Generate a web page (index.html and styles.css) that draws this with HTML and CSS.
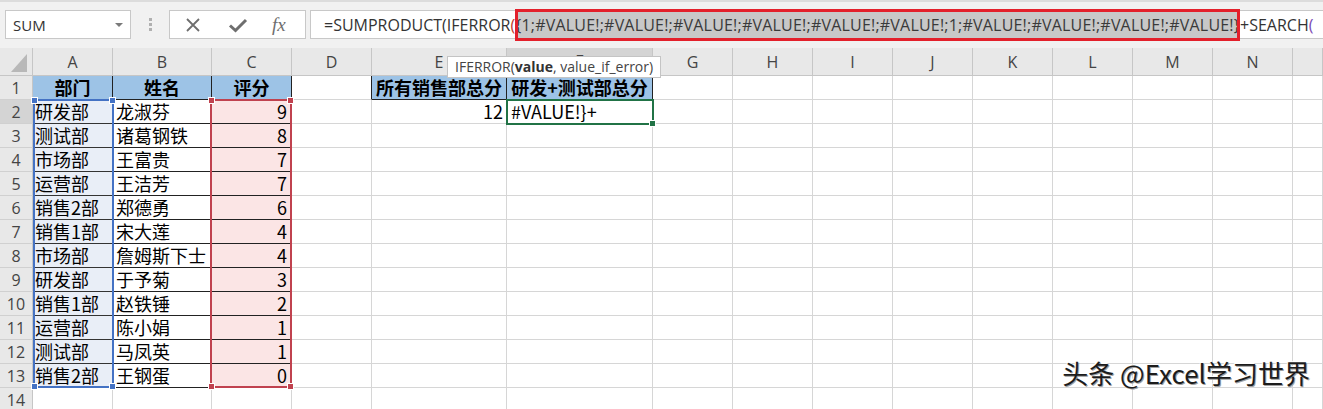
FILE: index.html
```html
<!DOCTYPE html>
<html lang="zh-CN">
<head>
<meta charset="utf-8">
<title>Excel</title>
<link rel="stylesheet" href="styles.css">
</head>
<body>
<div class="fbar">
  <div class="namebox">SUM<span class="caret"></span></div>
  <div class="grip"><span></span><span></span><span></span></div>
  <div class="fxbox">
    <svg class="ico" width="16" height="16" viewBox="0 0 16 16"><path d="M2 2 L14 14 M14 2 L2 14" stroke="#6e6e6e" stroke-width="1.8" fill="none"/></svg>
    <svg class="ico" width="20" height="16" viewBox="0 0 20 16"><path d="M2 8.5 L7.5 13.5 L18 3" stroke="#6e6e6e" stroke-width="3" fill="none" stroke-linejoin="miter"/></svg>
    <span class="fx">fx</span>
  </div>
  <div class="formula"><span>=SUMPRODUCT(IFERROR<span class="p1">(</span></span><span class="hl">{1;#VALUE!;#VALUE!;#VALUE!;#VALUE!;#VALUE!;#VALUE!;1;#VALUE!;#VALUE!;#VALUE!;#VALUE!}</span><span>+SEARCH<span class="p2">(</span></span></div>
</div>

<div class="sheet">
  <div class="c corner"><span class="tri"></span></div><div class="c ch">A</div><div class="c ch">B</div><div class="c ch">C</div><div class="c ch">D</div><div class="c ch">E</div><div class="c ch sel">F</div><div class="c ch">G</div><div class="c ch">H</div><div class="c ch">I</div><div class="c ch">J</div><div class="c ch">K</div><div class="c ch">L</div><div class="c ch">M</div><div class="c ch">N</div><div class="c ch"></div>

  <div class="c rh">1</div><div class="c th">部门</div><div class="c th">姓名</div><div class="c th">评分</div><div class="c bkr"></div><div class="c th">所有销售部总分</div><div class="c th">研发+测试部总分</div><div class="c"></div><div class="c"></div><div class="c"></div><div class="c"></div><div class="c"></div><div class="c"></div><div class="c"></div><div class="c"></div><div class="c"></div>

  <div class="c rh sel">2</div><div class="c ta">研发部</div><div class="c tb">龙淑芬</div><div class="c tc">9</div><div class="c"></div><div class="c num">12</div><div class="c txt">#VALUE!}+</div><div class="c"></div><div class="c"></div><div class="c"></div><div class="c"></div><div class="c"></div><div class="c"></div><div class="c"></div><div class="c"></div><div class="c"></div>

  <div class="c rh">3</div><div class="c ta">测试部</div><div class="c tb">诸葛钢铁</div><div class="c tc">8</div><div class="c"></div><div class="c"></div><div class="c"></div><div class="c"></div><div class="c"></div><div class="c"></div><div class="c"></div><div class="c"></div><div class="c"></div><div class="c"></div><div class="c"></div><div class="c"></div>

  <div class="c rh">4</div><div class="c ta">市场部</div><div class="c tb">王富贵</div><div class="c tc">7</div><div class="c"></div><div class="c"></div><div class="c"></div><div class="c"></div><div class="c"></div><div class="c"></div><div class="c"></div><div class="c"></div><div class="c"></div><div class="c"></div><div class="c"></div><div class="c"></div>

  <div class="c rh">5</div><div class="c ta">运营部</div><div class="c tb">王洁芳</div><div class="c tc">7</div><div class="c"></div><div class="c"></div><div class="c"></div><div class="c"></div><div class="c"></div><div class="c"></div><div class="c"></div><div class="c"></div><div class="c"></div><div class="c"></div><div class="c"></div><div class="c"></div>

  <div class="c rh">6</div><div class="c ta">销售2部</div><div class="c tb">郑德勇</div><div class="c tc">6</div><div class="c"></div><div class="c"></div><div class="c"></div><div class="c"></div><div class="c"></div><div class="c"></div><div class="c"></div><div class="c"></div><div class="c"></div><div class="c"></div><div class="c"></div><div class="c"></div>

  <div class="c rh">7</div><div class="c ta">销售1部</div><div class="c tb">宋大莲</div><div class="c tc">4</div><div class="c"></div><div class="c"></div><div class="c"></div><div class="c"></div><div class="c"></div><div class="c"></div><div class="c"></div><div class="c"></div><div class="c"></div><div class="c"></div><div class="c"></div><div class="c"></div>

  <div class="c rh">8</div><div class="c ta">市场部</div><div class="c tb">詹姆斯下士</div><div class="c tc">4</div><div class="c"></div><div class="c"></div><div class="c"></div><div class="c"></div><div class="c"></div><div class="c"></div><div class="c"></div><div class="c"></div><div class="c"></div><div class="c"></div><div class="c"></div><div class="c"></div>

  <div class="c rh">9</div><div class="c ta">研发部</div><div class="c tb">于予菊</div><div class="c tc">3</div><div class="c"></div><div class="c"></div><div class="c"></div><div class="c"></div><div class="c"></div><div class="c"></div><div class="c"></div><div class="c"></div><div class="c"></div><div class="c"></div><div class="c"></div><div class="c"></div>

  <div class="c rh">10</div><div class="c ta">销售1部</div><div class="c tb">赵铁锤</div><div class="c tc">2</div><div class="c"></div><div class="c"></div><div class="c"></div><div class="c"></div><div class="c"></div><div class="c"></div><div class="c"></div><div class="c"></div><div class="c"></div><div class="c"></div><div class="c"></div><div class="c"></div>

  <div class="c rh">11</div><div class="c ta">运营部</div><div class="c tb">陈小娟</div><div class="c tc">1</div><div class="c"></div><div class="c"></div><div class="c"></div><div class="c"></div><div class="c"></div><div class="c"></div><div class="c"></div><div class="c"></div><div class="c"></div><div class="c"></div><div class="c"></div><div class="c"></div>

  <div class="c rh">12</div><div class="c ta">测试部</div><div class="c tb">马凤英</div><div class="c tc">1</div><div class="c"></div><div class="c"></div><div class="c"></div><div class="c"></div><div class="c"></div><div class="c"></div><div class="c"></div><div class="c"></div><div class="c"></div><div class="c"></div><div class="c"></div><div class="c"></div>

  <div class="c rh">13</div><div class="c ta">销售2部</div><div class="c tb">王钢蛋</div><div class="c tc">0</div><div class="c"></div><div class="c"></div><div class="c"></div><div class="c"></div><div class="c"></div><div class="c"></div><div class="c"></div><div class="c"></div><div class="c"></div><div class="c"></div><div class="c"></div><div class="c"></div>

  <div class="c rh">14</div><div class="c"></div><div class="c"></div><div class="c"></div><div class="c"></div><div class="c"></div><div class="c"></div><div class="c"></div><div class="c"></div><div class="c"></div><div class="c"></div><div class="c"></div><div class="c"></div><div class="c"></div><div class="c"></div><div class="c"></div>

  <div class="range blue"><i class="k tl"></i><i class="k tr"></i><i class="k bl"></i><i class="k br"></i></div>
  <div class="range red"><i class="k tl"></i><i class="k tr"></i><i class="k bl"></i><i class="k br"></i></div>
  <div class="cursor"><i class="handle"></i></div>
</div>

<div class="tip">IFERROR(<b>value</b>, value_if_error)</div>
<div class="mark">头条 @Excel学习世界</div>
</body>
</html>
```

FILE: styles.css
```css
html, body {
  margin: 0;
  padding: 0;
}
body {
  width: 1323px;
  height: 409px;
  overflow: hidden;
  background: #fff;
  position: relative;
  font-family: "Noto Sans CJK SC", "Noto Sans", sans-serif;
}

/* formula bar */
.fbar {
  height: 48px;
  box-sizing: border-box;
  background: #f1f1f1;
  border-top: 2px solid #dcdcdc;
  padding-top: 8px;
  display: flex;
  align-items: flex-start;
}
.namebox {
  margin-left: 5px;
  width: 126px;
  height: 29px;
  box-sizing: border-box;
  border: 1px solid #c8c8c8;
  background: #fff;
  display: flex;
  align-items: center;
  padding-left: 7px;
  font: 15px "Open Sans", sans-serif;
  color: #333;
  position: relative;
}
.caret {
  position: absolute;
  right: 7px;
  top: 12px;
  width: 0;
  height: 0;
  border-left: 4px solid transparent;
  border-right: 4px solid transparent;
  border-top: 4px solid #7a7a7a;
}
.grip {
  width: 38px;
  height: 29px;
  display: flex;
  flex-direction: column;
  align-items: center;
  justify-content: center;
  gap: 2px;
}
.grip span {
  width: 3px;
  height: 3px;
  background: #b0b0b0;
}
.fxbox {
  width: 137px;
  height: 29px;
  box-sizing: border-box;
  border: 1px solid #c8c8c8;
  background: #fff;
  display: flex;
  align-items: center;
  padding-left: 15px;
  gap: 27px;
}
.ico { display: block; }
.fx {
  font: italic 19px "Liberation Serif", serif;
  color: #6e6e6e;
  margin-left: -3px;
}
.formula {
  margin-left: 4px;
  flex: 1;
  height: 29px;
  box-sizing: border-box;
  border: 1px solid #c8c8c8;
  border-right: none;
  background: #fff;
  display: flex;
  align-items: center;
  padding-left: 13px;
  white-space: nowrap;
  font: 16px "Open Sans", sans-serif;
  color: #333;
}
.p1 { color: #c0392b; }
.p2 { color: #7b4bb5; }
.hl {
  display: inline-block;
  height: 32px;
  line-height: 32px;
  box-sizing: border-box;
  background: #c8c8c8;
  outline: 3px solid #e3202b;
  outline-offset: -3px;
  font-size: 16px;
  letter-spacing: 0.2px;
  color: #3a3a3a;
}

/* sheet grid */
.sheet {
  position: relative;
  display: grid;
  grid-template-columns: 33px 80px 99px 80px 80px 135px 146px repeat(8, 80px) 30px;
  grid-template-rows: 28px repeat(14, 24px);
}
.c {
  box-sizing: border-box;
  border-right: 1px solid #d6d6d6;
  border-bottom: 1px solid #d6d6d6;
  font-size: 18px;
  line-height: 23px;
  color: #000;
  white-space: nowrap;
}
.ch, .rh, .corner {
  background: #e8e8e8;
  border-color: #c6c6c6;
  color: #444;
  font: 16px "Open Sans", sans-serif;
  display: flex;
  align-items: center;
  justify-content: center;
}
.rh { border-bottom-color: #d0d0d0; }
.ch.sel, .rh.sel { background: #d4d4d4; }
.ch.sel { border-bottom: 2px solid #217346; }
.corner { position: relative; }
.tri {
  position: absolute;
  right: 5px;
  bottom: 3px;
  width: 16px;
  height: 18px;
  background: #b8b8b8;
  clip-path: polygon(100% 0, 100% 100%, 0 100%);
}
.th {
  background: #9dc3e6;
  font-weight: 700;
  text-align: center;
  border-right-color: #222;
  border-bottom-color: #222;
}
.bkr { border-right-color: #222; }
.ta {
  background: #e9eef7;
  border-right-color: #222;
  border-bottom-color: #333;
  padding-left: 2px;
}
.tb {
  border-right-color: #222;
  border-bottom-color: #222;
  padding-left: 3px;
}
.tc {
  background: #fbe5e5;
  border-right-color: #222;
  border-bottom-color: #222;
  text-align: right;
  padding-right: 4px;
}
.num { text-align: right; padding-right: 3px; }
.txt { padding-left: 4px; }

/* reference highlights over the grid */
.range {
  position: absolute;
  top: 51px;
  height: 289px;
  box-sizing: border-box;
  border: 2px solid;
  pointer-events: none;
}
.range.blue { left: 33px; width: 81px; border-color: #4472c4; }
.range.red { left: 210px; width: 82px; border-color: #c0424f; }
.k {
  position: absolute;
  width: 5px;
  height: 5px;
  border: 1px solid #fff;
}
.blue .k { background: #4472c4; }
.red .k { background: #c0424f; }
.k.tl { left: -4px; top: -4px; }
.k.tr { right: -4px; top: -4px; }
.k.bl { left: -4px; bottom: -4px; }
.k.br { right: -4px; bottom: -4px; }
.cursor {
  position: absolute;
  left: 506px;
  top: 51px;
  width: 148px;
  height: 26px;
  box-sizing: border-box;
  border: 2px solid #217346;
}
.handle {
  position: absolute;
  right: -4px;
  bottom: -4px;
  width: 5px;
  height: 5px;
  background: #217346;
  border: 1px solid #fff;
}

.tip {
  position: absolute;
  left: 447px;
  top: 56px;
  height: 22px;
  box-sizing: border-box;
  padding: 0 7px;
  background: #fff;
  border: 1px solid #c4c4c4;
  font: 14px/20px "Open Sans", sans-serif;
  color: #444;
  white-space: nowrap;
}
.tip b { color: #333; }

.mark {
  position: absolute;
  right: 13px;
  top: 355px;
  font-size: 26px;
  line-height: 36px;
  color: #1c1c1c;
  text-shadow: 1px 1px 0 #a0a0a0, -1px -1px 0 #fff;
  white-space: nowrap;
}
```
